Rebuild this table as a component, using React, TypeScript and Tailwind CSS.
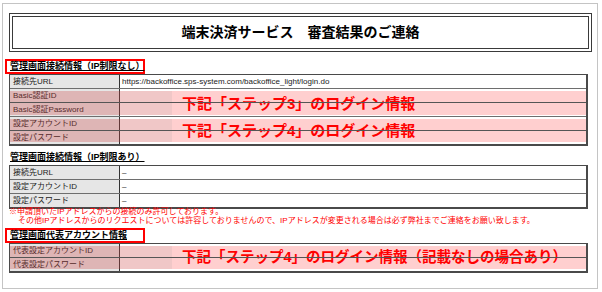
import React from 'react'

// Excel-style sheet: "端末決済サービス 審査結果のご連絡" with annotated login-info blocks.

type RowData = { label: string; value?: string }

function Row({ label, value, last }: RowData & { last?: boolean }) {
  return (
    <div className={last ? 'flex h-[13px]' : 'flex h-[14px] border-b border-[#6e6e6e]'}>
      <div className="w-[110px] shrink-0 border-r border-[#333] bg-[#e6e6e6] pl-[3px] text-[8px] leading-[13px] text-[#222] whitespace-nowrap">{label}</div>
      <div className="flex-1 pl-[2px] text-[8px] leading-[13px] text-[#222] whitespace-nowrap">{value}</div>
    </div>
  )
}

// Two rows covered by the pink "see step N" note; the row line stays visible on top.
function MarkedGroup({ rows, text, last, small }: { rows: RowData[]; text: string; last?: boolean; small?: boolean }) {
  return (
    <div className="relative">
      {rows.map((r, i) => (
        <Row key={r.label} {...r} last={last && i === rows.length - 1} />
      ))}
      <div className="absolute inset-x-0 top-[2px] bottom-[2px] flex">
        <div className="w-[162px] bg-[rgba(205,70,70,0.3)]" />
        <div className={`flex flex-1 items-center bg-[rgba(255,105,105,0.32)] pl-[10px] font-bold leading-none text-[#ff0000] whitespace-nowrap ${small ? 'text-[14.5px]' : 'text-[15px]'}`}>{text}</div>
      </div>
      <div className="absolute inset-x-0 top-[13px] h-px bg-[#555]" />
    </div>
  )
}

function Table({ children }: { children: React.ReactNode }) {
  return (
    <div className="w-[579px] border-t border-l border-r-2 border-b-2 border-[#4a4a4a]">{children}</div>
  )
}

function Heading({ children, boxed }: { children: React.ReactNode; boxed?: boolean }) {
  return (
    <div className={`ml-[-4px] h-[15px] w-[140px] border-2 pl-[3px] text-[9px] font-bold leading-[11px] text-black underline whitespace-nowrap ${boxed ? 'border-[#ff0000]' : 'border-transparent'}`}>
      {children}
    </div>
  )
}

export default function App() {
  return (
    <div className="h-[292px] w-[602px] bg-white pt-[3px] pl-[2px] font-['Liberation_Sans','Noto_Sans_CJK_JP',sans-serif]">
      <div className="h-[286px] w-[596px] border border-[#c4c4c4] pl-[6px] pt-[9px]">
        <div className="flex h-[39px] w-[583px] items-center justify-center border-4 border-double border-[#3a3a3a] text-[14px] font-bold text-black">
          端末決済サービス　審査結果のご連絡
        </div>

        <div className="mt-[7px]">
          <Heading boxed>管理画面接続情報（IP制限なし）</Heading>
        </div>
        <Table>
          <Row label="接続先URL" value="https://backoffice.sps-system.com/backoffice_light/login.do" />
          <MarkedGroup
            rows={[{ label: 'Basic認証ID' }, { label: 'Basic認証Password' }]}
            text="下記「ステップ3」のログイン情報"
          />
          <MarkedGroup
            rows={[{ label: '設定アカウントID' }, { label: '設定パスワード' }]}
            text="下記「ステップ4」のログイン情報"
            last
          />
        </Table>

        <div className="mt-[4px]">
          <Heading>管理画面接続情報（IP制限あり）</Heading>
        </div>
        <Table>
          <Row label="接続先URL" value="–" />
          <Row label="設定アカウントID" value="–" />
          <Row label="設定パスワード" value="–" last />
        </Table>

        <div className="mt-[-2px] text-[8px] leading-[9px] text-[#ff0000] whitespace-nowrap">
          <div>※申請頂いたIPアドレスからの接続のみ許可しております。</div>
          <div className="pl-[9px]">その他IPアドレスからのリクエストについては許容しておりませんので、IPアドレスが変更される場合は必ず弊社までご連絡をお願い致します。</div>
        </div>

        <div className="mt-[3px]">
          <Heading boxed>管理画面代表アカウント情報</Heading>
        </div>
        <Table>
          <MarkedGroup
            rows={[{ label: '代表設定アカウントID' }, { label: '代表設定パスワード' }]}
            text="下記「ステップ4」のログイン情報（記載なしの場合あり）"
            last
            small
          />
        </Table>
      </div>
    </div>
  )
}
